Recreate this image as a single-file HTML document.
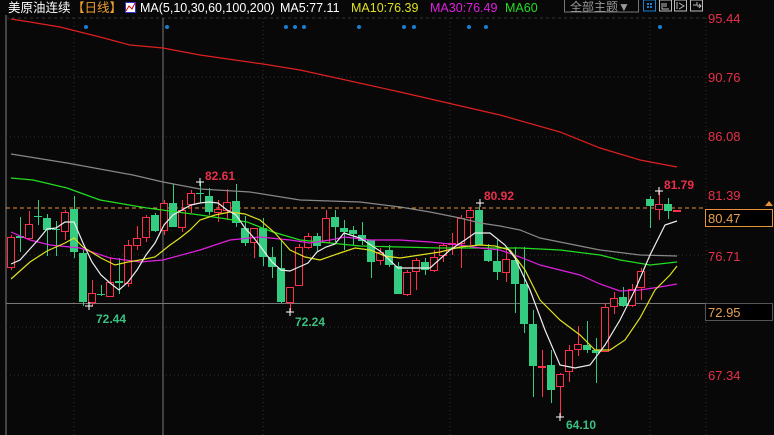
<!DOCTYPE html>
<html><head><meta charset="utf-8"><style>
body{margin:0;background:#080808;width:774px;height:435px;overflow:hidden;font-family:"Liberation Sans","Noto Sans CJK SC",sans-serif}
svg{position:absolute;left:0;top:0}
</style></head><body>
<svg id="s" width="774" height="435" xmlns="http://www.w3.org/2000/svg">
<rect width="774" height="435" fill="#080808"/>
<line x1="6" y1="0" x2="6" y2="435" stroke="#444" stroke-width="2"/>
<g stroke="#333" stroke-dasharray="1,3">
<line x1="6" y1="18" x2="705" y2="18" stroke-dasharray="3,3"/>
<line x1="6" y1="77" x2="705" y2="77"/><line x1="6" y1="137" x2="705" y2="137"/>
<line x1="6" y1="255" x2="705" y2="255"/><line x1="6" y1="327" x2="705" y2="327"/><line x1="6" y1="375" x2="705" y2="375"/>
<line x1="74" y1="18" x2="74" y2="435"/><line x1="263" y1="18" x2="263" y2="435"/><line x1="450" y1="18" x2="450" y2="435"/><line x1="650" y1="18" x2="650" y2="435"/><line x1="706" y1="18" x2="706" y2="435"/>
</g>
<line x1="163" y1="18" x2="163" y2="435" stroke="#777"/>
<line x1="6" y1="303.5" x2="705" y2="303.5" stroke="#777"/>
<line x1="6" y1="208" x2="705" y2="208" stroke="#e8903a" stroke-dasharray="4,3"/>
<g id="c"></g>
<g fill="none" stroke-width="1.2">
<polyline stroke="#e02020" points="11,19 30,22 60,27 100,37 130,45 163,48 200,55 263,64 300,70 400,92 500,115 560,132 600,148 640,160 677,167"/>
<polyline stroke="#888" points="11,154 67,163 133,175 163,182 200,189 250,192 300,200 360,202 400,207 430,212 460,218 480,223 500,226 520,230 540,238 600,250 640,255 677,256"/>
<polyline stroke="#22dd22" points="11,178 33,180 67,188 100,200 147,208 200,215 247,222 273,232 300,240 360,246 440,248 520,248 560,250 600,255 620,260 650,265 677,262"/>
<polyline stroke="#e020e0" points="11,232 30,240 50,245 80,248 110,258 140,262 163,260 200,250 230,240 260,237 290,240 310,243 330,240 345,237 370,240 400,240 430,242 460,245 480,248 500,250 520,257 540,265 560,270 580,275 600,284 620,291 640,290 660,287 677,284"/>
<polyline stroke="#e0e020" points="11,279 30,262 47,251 65,243 74,238 83,247 101,258 115,265 128,262 140,260 155,257 170,245 180,238 190,230 200,220 215,215 230,212 245,214 260,220 275,233 290,250 305,257 320,260 340,253 355,248 370,250 385,256 400,258 420,255 440,252 460,247 480,245 495,246 510,250 525,270 540,300 560,320 580,335 595,350 610,350 625,340 640,318 655,290 670,275 677,266"/>
<polyline stroke="#eee" points="11,264 20,260 29,250 38,240 47,229 56,228 65,222 74,222 83,243 92,262 101,275 110,283 119,290 128,282 137,270 146,255 155,243 164,225 173,215 182,210 191,205 200,203 209,202 218,203 227,210 236,215 245,228 254,238 263,250 272,262 281,270 290,271 299,267 308,263 317,252 326,247 335,244 344,233 360,238 380,251 398,268 410,268 430,268 450,250 465,240 475,233 490,233 505,245 515,258 530,290 545,330 560,365 575,368 590,365 605,345 620,320 635,290 650,255 665,225 677,221"/>
</g>
<g fill="#1a7fd0" id="d"></g>
<g font-size="12" font-weight="bold">
<text x="205" y="180" fill="#e8304a">82.61</text>
<text x="484" y="200" fill="#e8304a">80.92</text>
<text x="664" y="189" fill="#e8304a">81.79</text>
<text x="96" y="323" fill="#3ac080">72.44</text>
<text x="295" y="326" fill="#3ac080">72.24</text>
<text x="566" y="429" fill="#3ac080">64.10</text>
</g>
<g stroke="#fff"><path d="M85 306h8M89 302v8M286 312h8M290 308v8M556 417h8M560 413v8M196 182h8M200 178v8M476 203h8M480 199v8M655 191h8M659 187v8"/></g>
<rect x="0" y="0" width="774" height="15" fill="#080808"/>
<g font-size="13" fill="#e8304a">
<text x="708" y="23">95.44</text><text x="708" y="82">90.76</text><text x="708" y="141">86.08</text>
<text x="708" y="200">81.39</text><text x="708" y="261">76.71</text><text x="708" y="380">67.34</text>
</g>
<rect x="705.5" y="209.5" width="67" height="17" fill="#000" stroke="#e8903a"/>
<text x="708" y="223" font-size="13" fill="#e8a050">80.47</text>
<rect x="705.5" y="303.5" width="67" height="17" fill="#000" stroke="#555"/>
<text x="708" y="317" font-size="13" fill="#e8a050">72.95</text>
<path d="M765 206l4-5 4 5z" fill="#e8903a"/>
<g font-size="12.5">
<text x="8" y="12" fill="#fff">美原油连续</text>
<text x="72" y="12" fill="#f0a030">【日线】</text>
<rect x="125.5" y="2.5" width="10" height="10" fill="#fff" stroke="#33c"/><path d="M126 11l3-5 3 3 3-6" stroke="#d00" fill="none"/>
<text x="140" y="12" fill="#fff">MA(5,10,30,60,100,200)</text>
<text x="280" y="12" fill="#fff">MA5:77.11</text>
<text x="351" y="12" fill="#e0e020">MA10:76.39</text>
<text x="430" y="12" fill="#e020e0">MA30:76.49</text>
<text x="505" y="12" fill="#22dd22">MA60</text>
</g>
<rect x="564.5" y="-1" width="74" height="13" fill="none" stroke="#777"/>
<text x="570" y="11" font-size="12" fill="#999">全部主题▼</text>
<g fill="none" stroke="#bbb"><rect x="659.5" y="0" width="12" height="11"/><rect x="674.5" y="0" width="12" height="11"/><rect x="690.5" y="0" width="12" height="11"/>
<path d="M662 3v6h7M664 3v4M666 3v4M677 2v7M679 3l5 3-5 3M693 5h4v-3M697 6h4M699 4l2 2-2 2"/></g>
<rect x="643.5" y="0" width="12" height="11" fill="none" stroke="#1a7fd0"/>
<path d="M647 3h2v2h-2zM650 3h2v2h-2zM647 6h2v2h-2zM650 6h2v2h-2z" fill="#1a7fd0"/>
</svg>
<script>
var C=[[11,237,267,235,270,1],[20,236,238,217,252,0],[29,224,238,211,240,1],[38,216,217,200,225,0],[47,218,230,214,256,0],[56,229,230,221,256,0],[65,212,231,210,240,1],[74,209,252,196,258,0],[83,253,302,250,306,0],[92,293,302,280,306,1],[101,294,295,285,296,0],[110,282,296,257,296,1],[119,281,283,258,294,0],[128,245,283,240,287,1],[137,238,245,226,250,1],[146,217,237,215,242,1],[155,215,231,213,232,0],[164,203,230,200,235,1],[173,203,227,184,227,0],[182,210,227,200,232,1],[191,193,204,190,213,1],[200,193,194,182,203,0],[209,196,212,188,215,0],[218,209,212,200,222,1],[227,202,210,189,220,1],[236,201,223,184,227,0],[245,228,243,216,246,0],[254,228,242,228,258,1],[263,228,257,218,266,0],[272,257,267,247,278,0],[281,268,302,240,303,0],[290,287,302,287,312,1],[299,247,285,244,285,1],[308,236,247,233,249,1],[317,236,246,233,251,0],[326,218,242,210,242,1],[335,217,227,210,242,0],[344,228,232,220,250,0],[353,230,234,226,245,0],[362,235,241,222,245,0],[371,240,262,240,278,0],[380,252,260,248,265,1],[389,250,265,245,267,0],[398,266,294,262,294,0],[407,272,294,270,296,1],[416,260,271,258,290,1],[425,262,270,258,275,0],[434,257,270,250,272,1],[443,245,255,243,262,1],[452,243,244,233,255,1],[461,218,243,215,268,1],[470,210,217,207,245,1],[479,210,245,207,245,0],[488,250,261,244,262,0],[497,261,272,240,280,0],[506,259,272,248,282,1],[515,260,284,247,313,0],[524,284,324,247,333,0],[533,324,366,310,397,0],[542,366,367,350,397,1],[551,365,390,350,403,0],[560,374,386,373,417,1],[569,350,371,345,382,1],[578,344,349,326,356,1],[587,345,350,321,353,0],[596,350,353,338,383,0],[605,307,351,303,352,1],[614,298,306,292,314,1],[623,297,306,287,307,0],[632,289,305,284,307,1],[641,271,287,268,300,1],[650,199,206,196,228,0],[659,204,209,191,220,1],[668,204,211,198,219,0],[677,210,211,210,212,1]];
var g=document.getElementById('c'),h='';
C.forEach(function(c){var col=c[5]?'#ff3048':'#33cc80';h+='<line x1="'+(c[0]+.5)+'" y1="'+c[3]+'" x2="'+(c[0]+.5)+'" y2="'+c[4]+'" stroke="'+col+'"/>';var bh=Math.max(c[2]-c[1],1);
if(c[5])h+='<rect x="'+(c[0]-3.5)+'" y="'+(c[1]+.5)+'" width="7" height="'+bh+'" fill="#080808" stroke="'+col+'"/>';else h+='<rect x="'+(c[0]-4)+'" y="'+c[1]+'" width="8" height="'+bh+'" fill="'+col+'"/>';});
g.innerHTML=h;
var D=[86,167,286,295,304,359,404,414,469,486,660],s='';D.forEach(function(x){s+='<circle cx="'+x+'" cy="27" r="2"/>'});document.getElementById('d').innerHTML=s;
</script>
</body></html>
